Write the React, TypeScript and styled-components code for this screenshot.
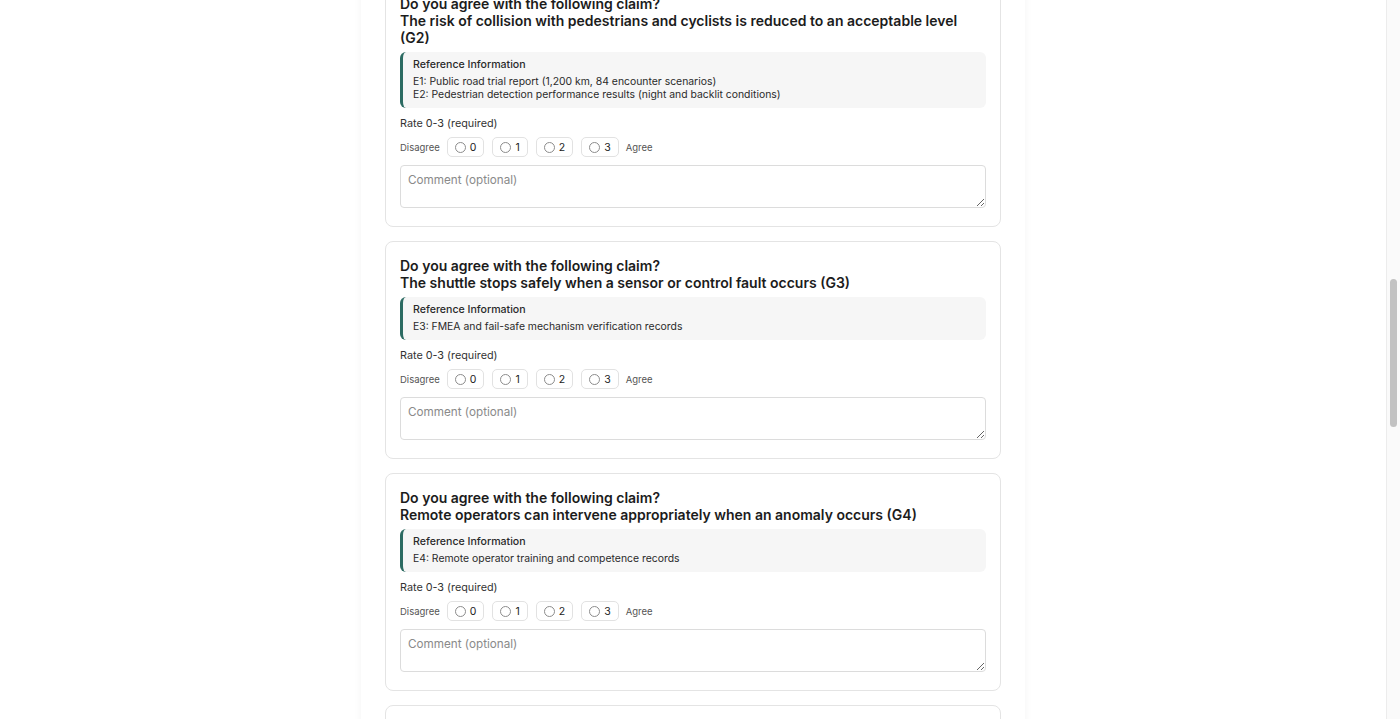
import React, { useLayoutEffect, useRef } from 'react'
import styled, { createGlobalStyle } from 'styled-components'

const GlobalStyle = createGlobalStyle`
    html, body {
        margin: 0;
        background: #ffffff;
    }
    body {
        font-family: Inter, "Noto Sans", sans-serif;
        color: #1f1f1f;
    }
    * {
        box-sizing: border-box;
    }
`

const Shell = styled.div`
    padding-right: 14px;
`

const Page = styled.main`
    width: 664px;
    margin: 0 auto;
    padding: 24px 24px 48px;
    min-height: 100vh;
    background: #ffffff;
    box-shadow: 0 0 8px rgba(0, 0, 0, 0.05);
    display: flex;
    flex-direction: column;
    gap: 14px;
`

// the window's scrollbar, drawn over the right edge
const ScrollTrack = styled.div`
    position: fixed;
    top: 0;
    right: 0;
    width: 14px;
    height: 100vh;
    background: #fafafa;
    border-left: 1px solid #ececec;
`

const ScrollThumb = styled.div`
    position: absolute;
    top: 279px;
    left: 3px;
    width: 7px;
    height: 148px;
    border-radius: 4px;
    background: #c2c2c2;
`

const Card = styled.section`
    border: 1px solid #e4e4e4;
    border-radius: 8px;
    background: #ffffff;
    padding: 15px 14px 18px;
    display: flex;
    flex-direction: column;
`

const Title = styled.h1`
    margin: 0 0 8px;
    font-size: 20px;
    font-weight: 600;
    line-height: 26px;
`

const Intro = styled.p`
    margin: 0 0 6px;
    font-size: 12px;
    line-height: 18px;
    color: #444;
`

const Question = styled.h2`
    margin: 0;
    font-size: 14px;
    font-weight: 600;
    line-height: 17px;
    color: #1c1c1c;
`

const RefBox = styled.div`
    margin-top: 6px;
    padding: 6px 12px 7px 10px;
    background: #f6f6f6;
    border-left: 3px solid #2c6b62;
    border-radius: 6px;
    display: flex;
    flex-direction: column;
`

const RefTitle = styled.div`
    font-size: 10.6px;
    font-weight: 500;
    line-height: 14px;
    margin-bottom: 3px;
    color: #2a2a2a;
`

const RefLine = styled.div`
    font-size: 10.4px;
    line-height: 13px;
    color: #2a2a2a;
`

const RateLabel = styled.div`
    margin-top: 9px;
    font-size: 10.8px;
    line-height: 14px;
    color: #333;
`

const ScaleRow = styled.div`
    margin-top: 6px;
    display: flex;
    align-items: center;
    gap: 7px;
`

const ScaleEnd = styled.span`
    font-size: 9.5px;
    color: #555;
`

const Options = styled.div`
    display: flex;
    gap: 8px;
`

const Option = styled.label`
    height: 20px;
    padding: 0 7px 0 7px;
    border: 1px solid #e2e2e2;
    border-radius: 5px;
    display: flex;
    align-items: center;
    gap: 4px;
    font-size: 10.5px;
    color: #222;
    cursor: pointer;
`

const Radio = styled.input`
    appearance: none;
    margin: 0;
    width: 11px;
    height: 11px;
    border: 1px solid #8c8c8c;
    border-radius: 50%;
    background: #fff;
`

const Comment = styled.textarea`
    margin-top: 8px;
    height: 43px;
    width: 100%;
    padding: 7px 7px;
    border: 1px solid #dcdcdc;
    border-radius: 4px;
    font-family: Inter, "Noto Sans", sans-serif;
    font-size: 11.7px;
    resize: vertical;
    &::placeholder {
        color: #8a8a8a;
    }
`

const Submit = styled.button`
    align-self: flex-end;
    height: 34px;
    padding: 0 20px;
    border: none;
    border-radius: 6px;
    background: #2c6b62;
    color: #fff;
    font-family: Inter, "Noto Sans", sans-serif;
    font-size: 13px;
    font-weight: 600;
`

type Claim = {
    id: string
    text: string
    refs: string[]
}

const claims: Claim[] = [
    {
        id: 'G1',
        text: 'The shuttle detects and responds correctly to traffic signals and road signs',
        refs: ['E0: Signal recognition test log (32 intersections)'],
    },
    {
        id: 'G2',
        text: 'The risk of collision with pedestrians and cyclists is reduced to an acceptable level',
        refs: [
            'E1: Public road trial report (1,200 km, 84 encounter scenarios)',
            'E2: Pedestrian detection performance results (night and backlit conditions)',
        ],
    },
    {
        id: 'G3',
        text: 'The shuttle stops safely when a sensor or control fault occurs',
        refs: ['E3: FMEA and fail-safe mechanism verification records'],
    },
    {
        id: 'G4',
        text: 'Remote operators can intervene appropriately when an anomaly occurs',
        refs: ['E4: Remote operator training and competence records'],
    },
    {
        id: 'G5',
        text: 'Cybersecurity threats to the vehicle and its communications are adequately controlled',
        refs: ['E5: Penetration test report and threat analysis (TARA)'],
    },
    {
        id: 'G6',
        text: 'Passengers are protected during emergency braking and evacuation',
        refs: ['E6: Emergency braking cabin tests', 'E7: Evacuation drill records'],
    },
    {
        id: 'G7',
        text: 'The operational design domain is clearly defined and monitored during service',
        refs: ['E8: ODD specification and runtime monitoring logs'],
    },
]

function ClaimCard({ claim, cardRef }: { claim: Claim; cardRef?: React.Ref<HTMLElement> }) {
    return (
        <Card ref={cardRef}>
            <Question>
                Do you agree with the following claim?
                <br />
                {claim.text} ({claim.id})
            </Question>
            <RefBox>
                <RefTitle>Reference Information</RefTitle>
                {claim.refs.map(r => (
                    <RefLine key={r}>{r}</RefLine>
                ))}
            </RefBox>
            <RateLabel>Rate 0-3 (required)</RateLabel>
            <ScaleRow>
                <ScaleEnd>Disagree</ScaleEnd>
                <Options>
                    {[0, 1, 2, 3].map(n => (
                        <Option key={n}>
                            <Radio type="radio" name={claim.id} value={n} />
                            {n}
                        </Option>
                    ))}
                </Options>
                <ScaleEnd>Agree</ScaleEnd>
            </ScaleRow>
            <Comment placeholder="Comment (optional)" />
        </Card>
    )
}

export default function App() {
    const anchor = useRef<HTMLElement>(null)

    useLayoutEffect(() => {
        // the picture is taken part way down the form, with the G3 card 241px from the top
        const el = anchor.current
        if (el) {
            const top = el.getBoundingClientRect().top + window.scrollY
            window.scrollTo(0, top - 241)
        }
    }, [])

    return (
        <>
            <GlobalStyle />
            <Shell>
                <Page>
                    <Card>
                        <Title>Safety Case Review Questionnaire</Title>
                        <Intro>
                            This questionnaire asks you to assess the top-level safety claims made for the
                            autonomous shuttle service. For each claim, review the reference information and
                            rate how far you agree that the claim is supported by the evidence.
                        </Intro>
                        <Intro>
                            0 = strongly disagree, 1 = somewhat disagree, 2 = somewhat agree, 3 = strongly agree.
                            Comments are optional but help us improve the safety case.
                        </Intro>
                    </Card>
                    <Card>
                        <Question>Reviewer information</Question>
                        <RateLabel>Name (optional)</RateLabel>
                        <Comment placeholder="Your name" />
                        <RateLabel>Role / organisation (optional)</RateLabel>
                        <Comment placeholder="e.g. safety assessor, operator, regulator" />
                    </Card>
                    {claims.map(c => (
                        <ClaimCard key={c.id} claim={c} cardRef={c.id === 'G3' ? anchor : undefined} />
                    ))}
                    <Card>
                        <Question>Overall comments</Question>
                        <Comment placeholder="Anything else you would like to add (optional)" />
                    </Card>
                    <Submit type="button">Submit</Submit>
                </Page>
            </Shell>
            <ScrollTrack>
                <ScrollThumb />
            </ScrollTrack>
        </>
    )
}
